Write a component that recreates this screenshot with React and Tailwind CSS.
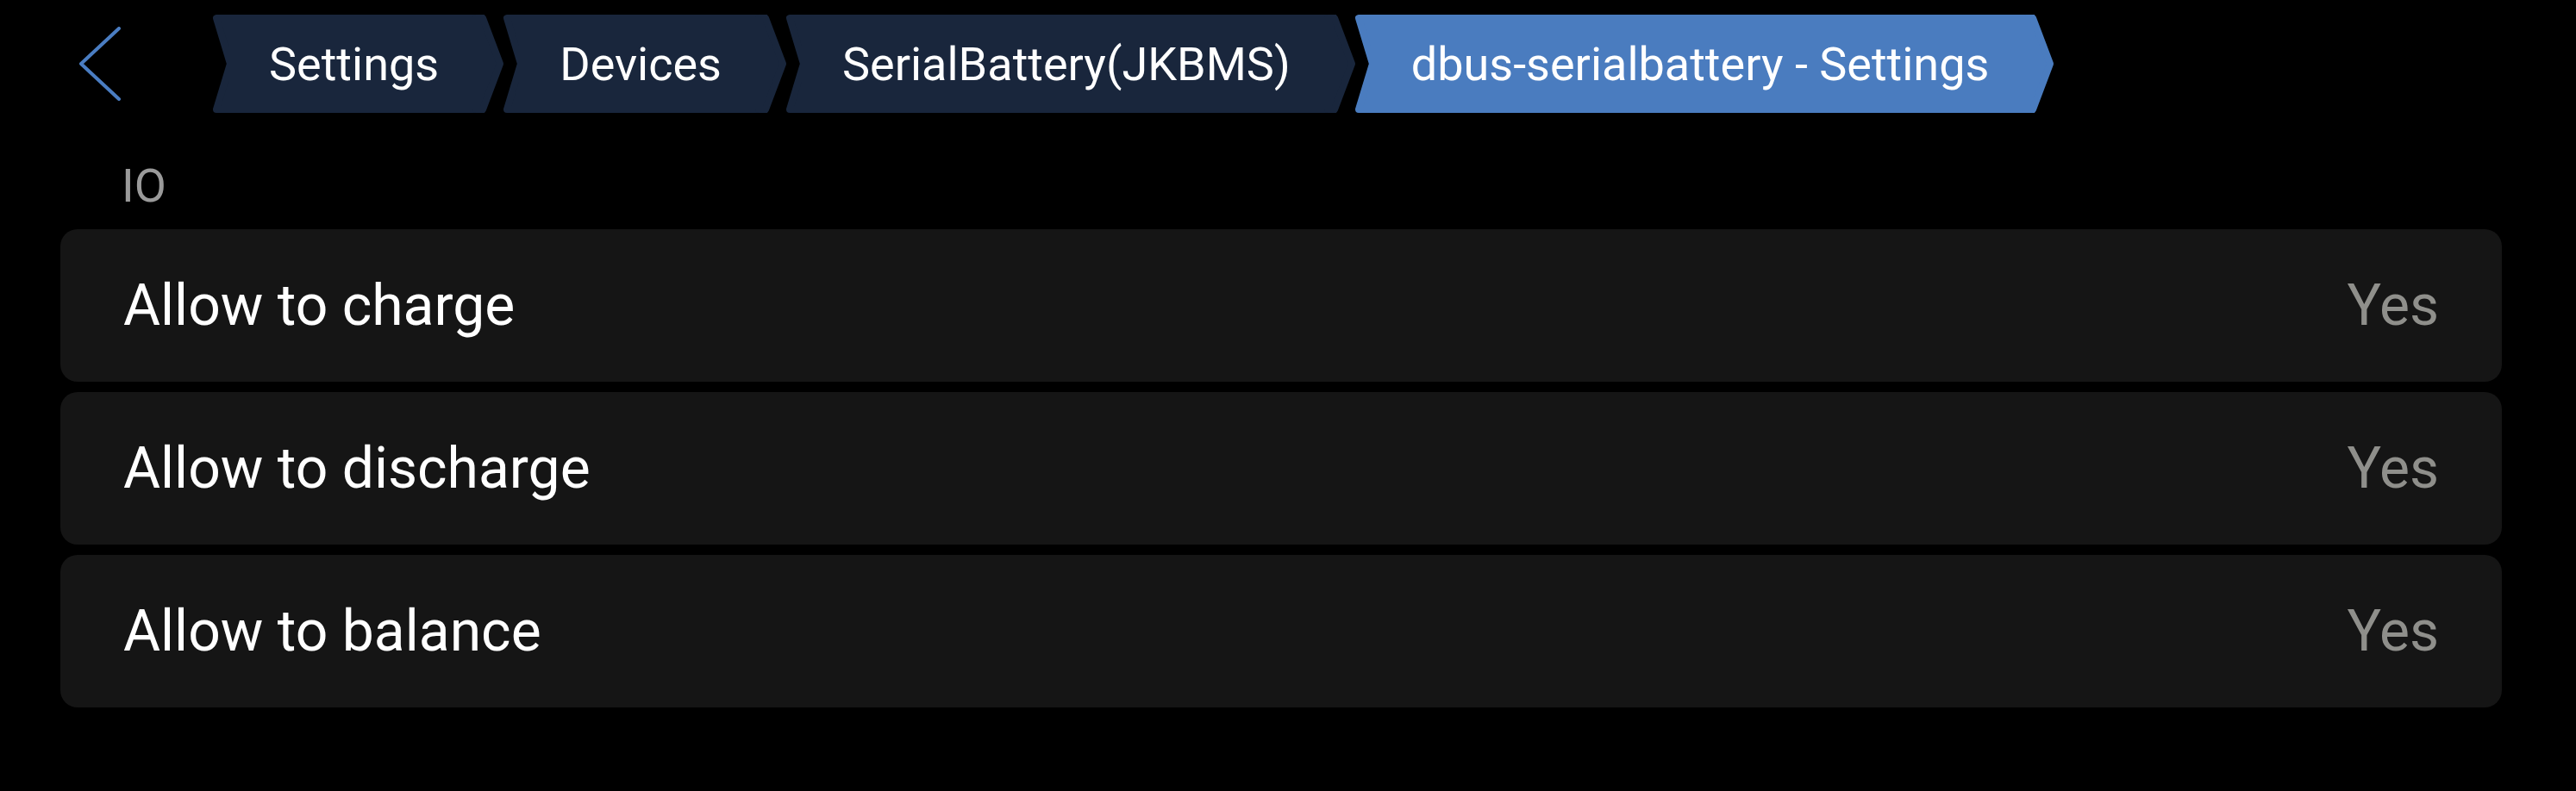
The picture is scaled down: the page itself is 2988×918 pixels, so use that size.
import React from "react";

const crumbs = [
  { label: "Settings" },
  { label: "Devices" },
  { label: "SerialBattery(JKBMS)" },
  { label: "dbus-serialbattery - Settings", active: true },
];

const rows = [
  { label: "Allow to charge", value: "Yes" },
  { label: "Allow to discharge", value: "Yes" },
  { label: "Allow to balance", value: "Yes" },
];

function Crumb({ label, active }) {
  const tone = active ? "text-[#4a7cbf]" : "text-[#19263c]";
  const bg = active ? "bg-[#4a7cbf]" : "bg-[#19263c]";
  return (
    <div className="flex h-[114px]">
      {/* notch */}
      <svg
        width="18"
        height="114"
        overflow="visible"
        className={`shrink-0 overflow-visible ${tone}`}
      >
        <path
          d="M4 4 L28 4 L28 110 L4 110 L20 57 Z"
          fill="currentColor"
          stroke="currentColor"
          strokeWidth="8"
          strokeLinejoin="round"
        />
      </svg>
      <div
        className={`flex items-center ${bg} pl-[47px] pr-[53px] text-[54px] text-white whitespace-nowrap`}
      >
        {label}
      </div>
      {/* point */}
      <svg
        width="22"
        height="114"
        overflow="visible"
        className={`shrink-0 overflow-visible ${tone}`}
      >
        <path
          d="M-10 4 L-2 4 L18 57 L-2 110 L-10 110 Z"
          fill="currentColor"
          stroke="currentColor"
          strokeWidth="8"
          strokeLinejoin="round"
        />
      </svg>
    </div>
  );
}

export default function App() {
  return (
    <div
      className="w-full h-[918px] bg-black overflow-hidden"
      style={{ fontFamily: "Roboto, 'Noto Sans', sans-serif" }}
    >
      <div className="flex items-center h-[114px] mt-[17px] pl-[92px] gap-[107px]">
        <svg width="48" height="86" viewBox="0 0 48 86" className="shrink-0">
          <polyline
            points="46,2 2,43 46,84"
            fill="none"
            stroke="#4a7dc2"
            strokeWidth="4"
            strokeLinecap="round"
            strokeLinejoin="round"
          />
        </svg>
        <div className="flex">
          {crumbs.map((c) => (
            <Crumb key={c.label} label={c.label} active={c.active} />
          ))}
        </div>
      </div>

      <div className="mt-[54px] h-[61px] flex items-center pl-[141px] text-[54px] text-[#9a9a9a]">
        IO
      </div>

      <div className="mt-[20px] ml-[70px] mr-[86px] flex flex-col gap-[12px]">
        {rows.map((r) => (
          <div
            key={r.label}
            className="h-[177px] rounded-[20px] bg-[#151515] flex items-center justify-between px-[73px] text-[66px]"
          >
            <span className="text-white">{r.label}</span>
            <span className="text-[#8f8f8b]">{r.value}</span>
          </div>
        ))}
      </div>
    </div>
  );
}
